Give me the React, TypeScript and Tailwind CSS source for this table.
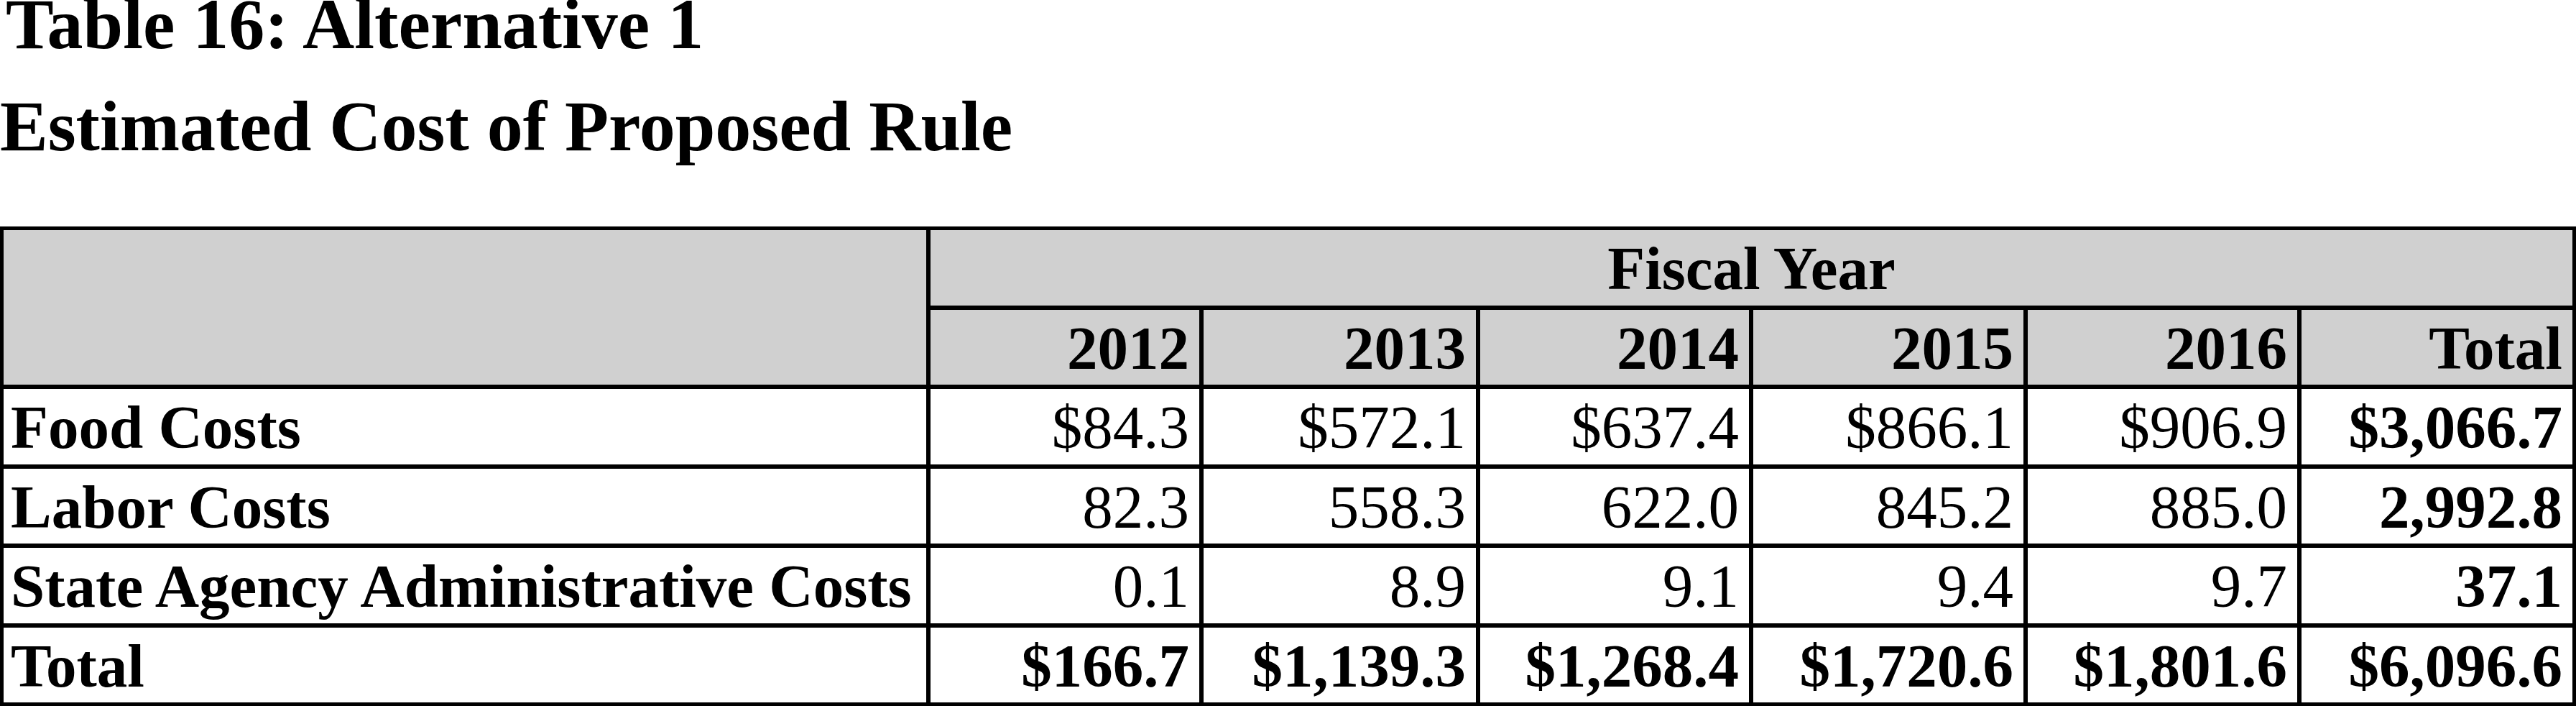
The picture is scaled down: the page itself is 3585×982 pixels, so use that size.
const years = ["2012", "2013", "2014", "2015", "2016", "Total"];

const rows = [
  {
    label: "Food Costs",
    values: ["$84.3", "$572.1", "$637.4", "$866.1", "$906.9", "$3,066.7"],
    total: false,
  },
  {
    label: "Labor Costs",
    values: ["82.3", "558.3", "622.0", "845.2", "885.0", "2,992.8"],
    total: false,
  },
  {
    label: "State Agency Administrative Costs",
    values: ["0.1", "8.9", "9.1", "9.4", "9.7", "37.1"],
    total: false,
  },
  {
    label: "Total",
    values: ["$166.7", "$1,139.3", "$1,268.4", "$1,720.6", "$1,801.6", "$6,096.6"],
    total: true,
  },
];

const App = () => {
  return (
    <div className="w-[3585px] h-[982px] bg-white text-black font-['Liberation_Serif',serif]">
      <div className="text-[100px] font-bold">
        <div className="pl-[8px] leading-[68px] h-[68px] whitespace-nowrap">Table 16: Alternative 1</div>
        <div className="mt-[74px] leading-[68px] h-[68px] whitespace-nowrap">Estimated Cost of Proposed Rule</div>
      </div>

      <div className="mt-[105px] grid grid-cols-[1284px_374px_379px_374px_376px_375px_377px] grid-rows-[105px_104px_105px_104px_105px_104px] gap-[6px] bg-black p-[5px] text-[85px] leading-[85px]">
        <div className="row-span-2 bg-[#d0d0d0]" />
        <div className="col-span-6 bg-[#d0d0d0] pt-[11px] text-center font-bold whitespace-nowrap">
          Fiscal Year
        </div>
        {years.map((y) => (
          <div key={y} className="bg-[#d0d0d0] pt-[11px] pr-[14px] text-right font-bold whitespace-nowrap">
            {y}
          </div>
        ))}

        {rows.map((r) => (
          <>
            <div key={r.label} className="bg-white pt-[11px] pl-[10px] font-bold whitespace-nowrap">
              {r.label}
            </div>
            {r.values.map((v, i) => (
              <div
                key={r.label + i}
                className={
                  "bg-white pt-[11px] pr-[14px] text-right whitespace-nowrap " +
                  (r.total || i === 5 ? "font-bold" : "font-normal")
                }
              >
                {v}
              </div>
            ))}
          </>
        ))}
      </div>
    </div>
  );
};

export default App;
